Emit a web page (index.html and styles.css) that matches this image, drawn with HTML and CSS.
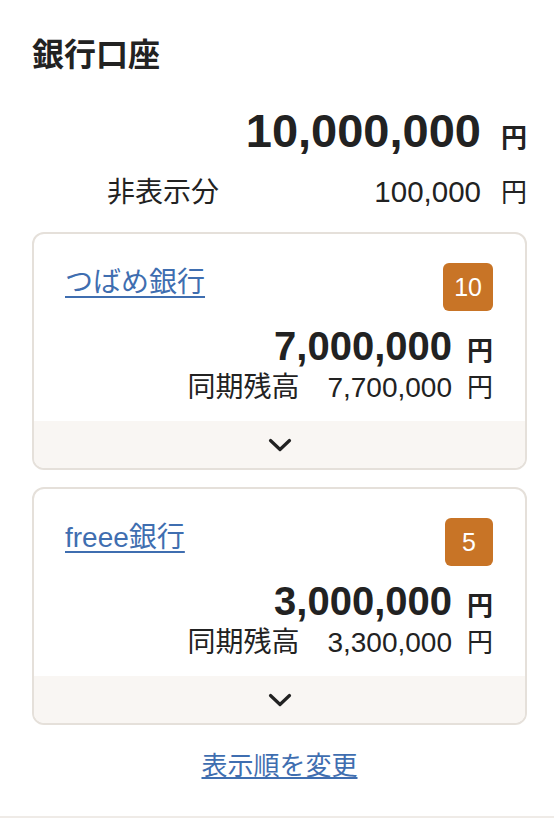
FILE: index.html
```html
<!DOCTYPE html>
<html lang="ja">
<head>
<meta charset="utf-8">
<title>銀行口座</title>
<link rel="stylesheet" href="styles.css">
</head>
<body>
<section class="panel">
  <h2 class="title">銀行口座</h2>
  <div class="total">
    <span class="total-amount">10,000,000</span><span class="unit unit-bold">円</span>
  </div>
  <div class="hidden-row">
    <span class="hidden-label">非表示分</span>
    <span class="hidden-value">100,000</span><span class="unit">円</span>
  </div>
  <ul class="accounts">
    <li class="account">
      <div class="account-body">
        <div class="account-head">
          <a class="account-name" href="#">つばめ銀行</a>
          <span class="badge">10</span>
        </div>
        <div class="balance"><span class="balance-amount">7,000,000</span><span class="unit-sm unit-bold">円</span></div>
        <div class="prev"><span class="prev-label">同期残高</span><span class="prev-amount">7,700,000</span><span class="unit-sm">円</span></div>
      </div>
      <button class="account-toggle" type="button" aria-label="詳細を表示">
        <svg class="chevron" width="24" height="14" viewBox="0 0 24 14"><polyline points="2.5,2.5 12,11.5 21.5,2.5" fill="none" stroke="#222" stroke-width="3.2" stroke-linecap="round" stroke-linejoin="round"/></svg>
      </button>
    </li>
    <li class="account">
      <div class="account-body">
        <div class="account-head">
          <a class="account-name" href="#">freee銀行</a>
          <span class="badge">5</span>
        </div>
        <div class="balance"><span class="balance-amount">3,000,000</span><span class="unit-sm unit-bold">円</span></div>
        <div class="prev"><span class="prev-label">同期残高</span><span class="prev-amount">3,300,000</span><span class="unit-sm">円</span></div>
      </div>
      <button class="account-toggle" type="button" aria-label="詳細を表示">
        <svg class="chevron" width="24" height="14" viewBox="0 0 24 14"><polyline points="2.5,2.5 12,11.5 21.5,2.5" fill="none" stroke="#222" stroke-width="3.2" stroke-linecap="round" stroke-linejoin="round"/></svg>
      </button>
    </li>
  </ul>
  <div class="reorder-row"><a class="reorder" href="#">表示順を変更</a></div>
</section>
<div class="bottom-bar"></div>
</body>
</html>
```

FILE: styles.css
```css
* {
  box-sizing: border-box;
}

html, body {
  margin: 0;
  padding: 0;
  background: #ffffff;
}

body {
  font-family: "Liberation Sans", "Noto Sans CJK JP", sans-serif;
  color: #222222;
}

.panel {
  padding: 35px 27px 32px 32px;
}

.title {
  margin: 0;
  font-size: 32px;
  line-height: 40px;
  font-weight: 700;
}

.total {
  margin-top: 28px;
  display: flex;
  justify-content: flex-end;
  align-items: baseline;
  line-height: 56px;
}

.total-amount {
  font-size: 47px;
  font-weight: 700;
}

.unit {
  font-size: 26px;
  line-height: 1;
  margin-left: 20px;
}

.unit-bold {
  font-weight: 700;
}

.hidden-row {
  margin-top: 16px;
  display: flex;
  align-items: baseline;
  font-size: 28px;
  line-height: 34px;
  padding-left: 75px;
}

.hidden-label {
  margin-right: auto;
}

.hidden-value {
  font-size: 29.5px;
}

.accounts {
  list-style: none;
  margin: 22px 0 0;
  padding: 0;
  display: flex;
  flex-direction: column;
  gap: 17px;
}

.account {
  border: 2px solid #e5e0da;
  border-radius: 12px;
  overflow: hidden;
}

.account-body {
  padding: 29px 32px 16px 31px;
}

.account-head {
  display: flex;
  justify-content: space-between;
  align-items: flex-start;
}

.account-name {
  font-size: 28px;
  line-height: 40px;
  color: #3f6eb0;
  text-decoration: underline;
  text-decoration-thickness: 2px;
  text-underline-offset: 4px;
}

.badge {
  min-width: 48px;
  height: 48px;
  padding: 0 11px;
  border-radius: 6px;
  background: #c87426;
  color: #ffffff;
  font-size: 25px;
  display: flex;
  align-items: center;
  justify-content: center;
}

.balance {
  margin-top: 13px;
  display: flex;
  justify-content: flex-end;
  align-items: baseline;
  line-height: 44px;
}

.balance-amount {
  font-size: 40px;
  font-weight: 700;
}

.unit-sm {
  font-size: 26px;
  line-height: 1;
  margin-left: 15px;
}

.prev {
  margin-top: 3px;
  display: flex;
  justify-content: flex-end;
  align-items: baseline;
  font-size: 28px;
  line-height: 34px;
}

.prev-label {
  margin-right: 28px;
}

.account-toggle {
  display: flex;
  align-items: center;
  justify-content: center;
  width: 100%;
  height: 47px;
  margin: 0;
  padding: 0;
  border: none;
  background: #f9f6f3;
  cursor: pointer;
}

.chevron {
  display: block;
}

.reorder-row {
  margin-top: 23px;
  text-align: center;
  font-size: 26px;
  line-height: 36px;
}

.reorder {
  color: #3f6eb0;
  text-decoration: underline;
  text-decoration-thickness: 2px;
  text-underline-offset: 2px;
}

.bottom-bar {
  height: 12px;
  background: #efebe7;
}
```
